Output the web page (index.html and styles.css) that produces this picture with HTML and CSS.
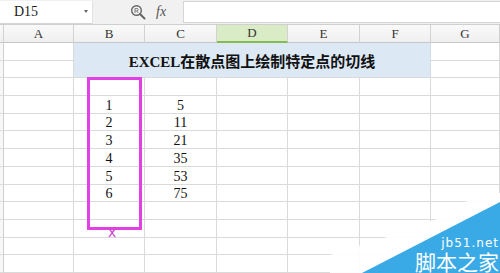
FILE: index.html
```html
<!DOCTYPE html>
<html lang="zh-CN">
<head>
    <meta charset="UTF-8">
    <title>EXCEL在散点图上绘制特定点的切线</title>
    <link rel="stylesheet" href="styles.css">
</head>
<body>
    <div id="barra">
        <div id="nombre">
            <span>D15</span>
            <span class="flecha"></span>
        </div>
        <div id="iconos">
            <svg width="16" height="16" viewBox="0 0 16 16">
                <circle cx="6.5" cy="6.5" r="4.8" fill="none" stroke="#666" stroke-width="1.4"/>
                <path d="M10 10 L14.5 14.5" stroke="#666" stroke-width="2" stroke-linecap="round"/>
                <path d="M5 4.5 h2 a1.2 1.2 0 0 1 0 2.4 h-2 M5 4.5 v4.5 M6.8 7 l1.4 2" fill="none" stroke="#777" stroke-width="0.9"/>
            </svg>
            <span class="fx">fx</span>
        </div>
        <div id="formula"></div>
    </div>

    <div id="hoja">
        <div class="cab esq"></div>
        <div class="cab">A</div>
        <div class="cab">B</div>
        <div class="cab">C</div>
        <div class="cab activa">D</div>
        <div class="cab">E</div>
        <div class="cab">F</div>
        <div class="cab">G</div>

        <div class="fila"></div><div class="c"></div>
        <div class="titulo">EXCEL在散点图上绘制特定点的切线</div>
        <div class="c"></div>
        <div class="fila"></div><div class="c"></div><div class="c"></div>

        <div class="fila"></div><div class="c"></div><div class="c"></div><div class="c"></div><div class="c"></div><div class="c"></div><div class="c"></div><div class="c"></div>
        <div class="fila"></div><div class="c"></div><div class="c n">1</div><div class="c n">5</div><div class="c"></div><div class="c"></div><div class="c"></div><div class="c"></div>
        <div class="fila"></div><div class="c"></div><div class="c n">2</div><div class="c n">11</div><div class="c"></div><div class="c"></div><div class="c"></div><div class="c"></div>
        <div class="fila"></div><div class="c"></div><div class="c n">3</div><div class="c n">21</div><div class="c"></div><div class="c"></div><div class="c"></div><div class="c"></div>
        <div class="fila"></div><div class="c"></div><div class="c n">4</div><div class="c n">35</div><div class="c"></div><div class="c"></div><div class="c"></div><div class="c"></div>
        <div class="fila"></div><div class="c"></div><div class="c n">5</div><div class="c n">53</div><div class="c"></div><div class="c"></div><div class="c"></div><div class="c"></div>
        <div class="fila"></div><div class="c"></div><div class="c n">6</div><div class="c n">75</div><div class="c"></div><div class="c"></div><div class="c"></div><div class="c"></div>
        <div class="fila"></div><div class="c"></div><div class="c"></div><div class="c"></div><div class="c"></div><div class="c"></div><div class="c"></div><div class="c"></div>
        <div class="fila"></div><div class="c"></div><div class="c"></div><div class="c"></div><div class="c"></div><div class="c"></div><div class="c"></div><div class="c"></div>
        <div class="fila"></div><div class="c"></div><div class="c"></div><div class="c"></div><div class="c"></div><div class="c"></div><div class="c"></div><div class="c"></div>
        <div class="fila"></div><div class="c"></div><div class="c"></div><div class="c"></div><div class="c"></div><div class="c"></div><div class="c"></div><div class="c"></div>

        <!-- marca a mano sobre la columna B -->
        <div id="marco"></div>
        <div id="cruz">x</div>

        <!-- marca de agua -->
        <svg id="agua" width="170" height="80" viewBox="0 0 170 80">
            <polygon points="150,0 170,0 170,80 0,80 0,62 57,44 107,26" fill="#fff" opacity="0.9"/>
            <polygon points="32,80 170,9 170,80" fill="#3aaae6"/>
        </svg>
        <div id="sello">
            <span class="web">jb51.net</span>
            <span class="casa">脚本之家</span>
        </div>
    </div>
</body>
</html>
```

FILE: styles.css
```css
* {
    box-sizing: border-box;
}
body {
    margin: 0;
    width: 500px;
    height: 273px;
    overflow: hidden;
    background: #fff;
    font-family: "Liberation Serif", "Noto Sans CJK SC", serif;
}
#barra {
    display: flex;
    align-items: center;
    height: 25px;
    background-color: #f1f1f1;
    border-bottom: 1px solid #cfcfcf;
}
#nombre {
    display: flex;
    align-items: center;
    justify-content: space-between;
    width: 93px;
    height: 23px;
    padding: 0 4px 0 14px;
    background-color: #fff;
    border-bottom: 1px solid #d4d4d4;
    border-right: 1px solid #e2e2e2;
    font-size: 14px;
    color: #222;
}
.flecha {
    width: 0;
    height: 0;
    border-left: 2.5px solid transparent;
    border-right: 2.5px solid transparent;
    border-top: 3px solid #666;
}
#iconos {
    display: flex;
    align-items: center;
    gap: 10px;
    width: 90px;
    padding-left: 37px;
}
.fx {
    font-style: italic;
    font-size: 14px;
    color: #555;
}
#formula {
    flex: 1;
    height: 22px;
    background-color: #fff;
    border: 1px solid #d6d6d6;
    border-right: none;
}
#hoja {
    position: relative;
    display: grid;
    grid-template-columns: 4px 70px 71px 72px 71px 72px 71px 69px;
    grid-template-rows: 18px;
    grid-auto-rows: 17.7px;
    height: 248px;
    overflow: hidden;
}
.cab {
    display: flex;
    align-items: center;
    justify-content: center;
    background: linear-gradient(#fafafa, #efefef);
    border-right: 1px solid #d2d2d2;
    border-bottom: 1px solid #c6c6c6;
    font-size: 13px;
    color: #333;
}
.cab.activa {
    background: #d9ecc6;
    border-bottom: 2px solid #86bb52;
}
.fila {
    background-color: #f7f7f7;
    border-right: 1px solid #cfcfcf;
    border-bottom: 1px solid #dcdcdc;
}
.c {
    border-right: 1px solid #dadada;
    border-bottom: 1px solid #dadada;
}
.n {
    display: flex;
    align-items: flex-end;
    justify-content: center;
    font-size: 14px;
    line-height: 15px;
    color: #111;
}
.titulo {
    grid-column: span 5;
    grid-row: span 2;
    display: flex;
    align-items: center;
    justify-content: center;
    background-color: #dce9f5;
    border-right: 1px solid #d0dbe6;
    border-bottom: 1px solid #dadada;
    font-size: 15px;
    font-weight: bold;
    color: #111;
}
#marco {
    position: absolute;
    left: 87px;
    top: 52px;
    width: 55px;
    height: 153px;
    border: 3px solid #e040e4;
}
#cruz {
    position: absolute;
    left: 108px;
    top: 200px;
    font-family: "DejaVu Sans", sans-serif;
    font-size: 14px;
    line-height: 14px;
    color: #c845cc;
}
#agua {
    position: absolute;
    right: 0;
    bottom: 0;
}
#sello {
    position: absolute;
    right: 1px;
    bottom: 1px;
    display: flex;
    flex-direction: column;
    align-items: flex-end;
    gap: 1px;
    color: #fff;
    font-family: "DejaVu Sans", "Noto Sans CJK SC", sans-serif;
}
.web {
    font-size: 12px;
    line-height: 12px;
    letter-spacing: 1px;
}
.casa {
    font-family: "Noto Sans CJK SC", sans-serif;
    font-size: 21px;
    line-height: 22px;
}
```
